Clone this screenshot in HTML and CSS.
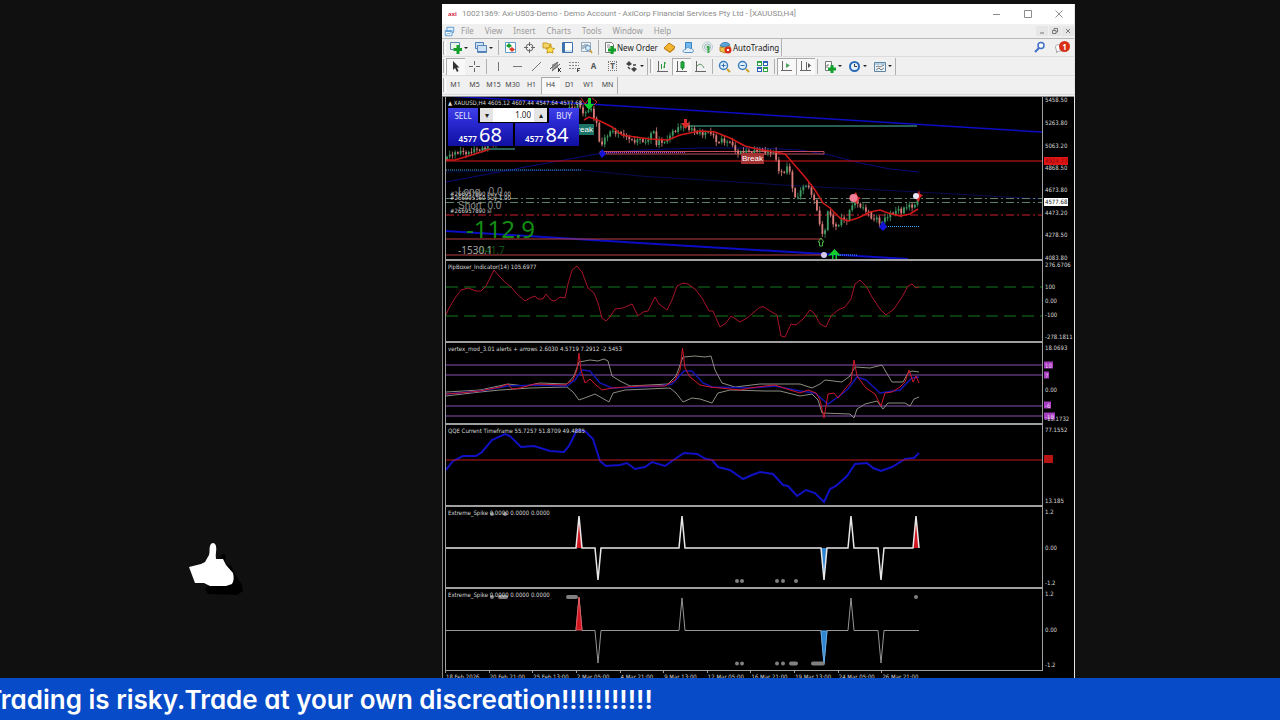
FILE: index.html
```html
<!DOCTYPE html>
<html lang="en">
<head>
	<meta charset="utf-8">
	<title>XAUUSD,H4</title>
	<link rel="stylesheet" href="styles.css">
</head>
<body>
<main class="stage">
	<aside class="side">
		<svg class="thumb" viewBox="0 0 56 56" width="56" height="56">
			<path d="M17 49L26 40L32 17L36 13L38 18L36 24L43 26L50 39L54 45L55 51L49 55L20 54Z" fill="#000"/>
			<path d="M1 27L13 24L17 22L21 15C22 12 21 9 22 6C23 2 27 2 28 6C29 10 27 14 28 19L35 19L38 25L45 33C46 37 46 41 44 44L38 46L22 46L16 43L7 43Z" fill="#fff"/>
		</svg>
	</aside>
	<section class="window">
		<header class="titlebar">
			<span class="brand">axi</span>
			<h1>10021369: Axi-US03-Demo - Demo Account - AxiCorp Financial Services Pty Ltd - [XAUUSD,H4]</h1>
			<button class="win" aria-label="Minimize"><svg viewBox="0 0 10 10"><path d="M1 5.500H8"/></svg></button>
			<button class="win" aria-label="Maximize"><svg viewBox="0 0 10 10"><path d="M1.500 1.500H8.500V8.500H1.500Z"/></svg></button>
			<button class="win" aria-label="Close"><svg viewBox="0 0 10 10"><path d="M1.500 1.500L8.500 8.500M8.500 1.500L1.500 8.500"/></svg></button>
		</header>
		<nav class="menubar">
			<svg class="ico" viewBox="0 0 13 13"><path d="M3.500 1.500H11.500V7.500H3.500Z" fill="#dff0fb" stroke="#4a90cc"/><path d="M1.500 5.500H9.500V11.500H1.500Z" fill="#fff" stroke="#4a90cc"/><path d="M2 6.500H9M3 10L5 8.500L6 9.500L8 8" stroke="#4a90cc" fill="none"/></svg>
			<a href="#">File</a><a href="#">View</a><a href="#">Insert</a><a href="#">Charts</a><a href="#">Tools</a><a href="#">Window</a><a href="#">Help</a>
			<span class="mdi">
				<button aria-label="Minimize chart"><svg viewBox="0 0 8 8"><path d="M2 6H6"/></svg></button>
				<button aria-label="Restore chart"><svg viewBox="0 0 8 8"><path d="M3 3V1.500H6.500V5H5M1.500 3.500H5V6.500H1.500Z"/></svg></button>
				<button aria-label="Close chart"><svg viewBox="0 0 8 8"><path d="M2 2L6 6M6 2L2 6"/></svg></button>
			</span>
		</nav>

		<div class="toolbar">
			<i class="grip"></i>
			<button class="drop" aria-label="New chart"><svg class="ico" viewBox="0 0 13 13"><path d="M1.500 1.500H10.500V8.500H1.500Z" fill="#e8f4e8" stroke="#5b87b5"/><path d="M9 4V13M4.500 8.500H13" stroke="#12a02a" stroke-width="3"/></svg></button>
			<button class="drop" aria-label="Profiles"><svg class="ico" viewBox="0 0 13 13"><path d="M1.500 1.500H9.500V7.500H1.500Z" fill="#cfe3f8" stroke="#4f7fb8"/><path d="M3.500 4.500H12.500V11.500H3.500Z" fill="#cfe3f8" stroke="#5b87b5"/><path d="M4 10.500H12" stroke="#4f7fb8"/></svg></button>
			<i class="sep"></i>
			<button aria-label="Market Watch"><svg class="ico" viewBox="0 0 13 13"><path d="M1.500 1.500H11.500V11.500H1.500Z" fill="#fff" stroke="#5f9ac8"/><path d="M2 5L5 2L8 5L5 7Z" fill="#18a030"/><path d="M5 8L8 6L11 8.500L8 11Z" fill="#d8402c"/></svg></button>
			<button aria-label="Data Window"><svg class="ico" viewBox="0 0 13 13"><circle cx="6.500" cy="6.500" r="3.500" fill="none" stroke="#666"/><path d="M6.500 1V5M6.500 8V12M1 6.500H5M8 6.500H12" stroke="#666"/></svg></button>
			<button aria-label="Navigator"><svg class="ico" viewBox="0 0 13 13"><path d="M1 2H5L6 3H9V7H1Z" fill="#f3d56b" stroke="#c79b25"/><path d="M8 4L9.500 7L12.500 7.500L10.500 9.500L11 12L8 11L5 12L5.500 9.500L4 7.500L7 7Z" fill="#ffe14d" stroke="#c8961a"/></svg></button>
			<button aria-label="Terminal"><svg class="ico" viewBox="0 0 13 13"><path d="M1.500 1.500H11.500V11.500H1.500Z" fill="#fff" stroke="#3f73ad"/><path d="M2 2H4V11H2Z" fill="#3f73ad"/><path d="M4 10H11" stroke="#a8c4e0"/></svg></button>
			<button aria-label="Strategy Tester"><svg class="ico" viewBox="0 0 13 13"><path d="M1.500 1.500H10.500V10.500H1.500Z" fill="#eef3f8" stroke="#92a8bd"/><path d="M3 4V8M5 3V7M7 3V6" stroke="#62788e"/><circle cx="8" cy="7" r="2.500" fill="#d7ecfb" stroke="#5f8fbe"/><path d="M10 9L12 12" stroke="#c9962a" stroke-width="1.500"/></svg></button>
			<i class="sep"></i>
			<button class="text"><svg class="ico" viewBox="0 0 13 13"><path d="M2.500 1.500H8.500L10.500 3.500V11.500H2.500Z" fill="#fff" stroke="#777"/><path d="M4 4H7M4 6H8" stroke="#888"/><path d="M9 5V13M5 9H13" stroke="#12a02a" stroke-width="3"/></svg>New Order</button>
			<button aria-label="MetaEditor"><svg class="ico" viewBox="0 0 13 13"><path d="M1 7L6 2L12 6L7 11Z" fill="#f2b632" stroke="#b87a12"/><path d="M1 7L7 11L12 7V8L7 12L1 8Z" fill="#c98a1a"/></svg></button>
			<button aria-label="Hosting"><svg class="ico" viewBox="0 0 13 13"><path d="M3.500 1.500H9.500V8H3.500Z" fill="#70b8ee" stroke="#3a83c2"/><path d="M2.500 11.500C0 11 1 8 3.500 8.500C4 6 7 6 8 7.500C11 7 13 11 10 11.500Z" fill="#e3f0fb" stroke="#5b93c6"/></svg></button>
			<button aria-label="Signals"><svg class="ico" viewBox="0 0 13 13"><circle cx="6.500" cy="6" r="5" fill="none" stroke="#bbcdd0"/><circle cx="6.500" cy="6" r="3" fill="none" stroke="#8fb4c0"/><circle cx="7" cy="6" r="1.500" fill="#3ca84c"/><path d="M7.500 6V12" stroke="#3ca84c" stroke-width="2"/></svg></button>
			<button class="text"><svg class="ico" viewBox="0 0 13 13"><path d="M1 5C2 1 9 0 11 4L6 6Z" fill="#5aa5dc" stroke="#3b7fb4"/><path d="M1 6L6 7L11 5V9L6 12L1 10Z" fill="#f0c24a" stroke="#b88a24"/><circle cx="9" cy="9" r="3.500" fill="#d8311d"/><path d="M8 8H10V10H8Z" fill="#fff"/></svg>AutoTrading</button>
			<i class="end"></i>
			<span class="tray">
				<button aria-label="Search"><svg class="ico" viewBox="0 0 13 13"><circle cx="8" cy="4.500" r="3" fill="#fff" stroke="#3f6fc4" stroke-width="1.500"/><path d="M6 7L2 11" stroke="#3f6fc4" stroke-width="2"/></svg></button>
				<button class="bell" aria-label="Notifications"><svg class="ico" viewBox="0 0 13 13"><path d="M1.500 6C1 3 8 3 8 6V10H4L2.500 12V10Z" fill="#fff" stroke="#aaa"/></svg><b>1</b></button>
			</span>
		</div>

		<div class="toolbar">
			<i class="grip"></i>
			<button class="on" aria-label="Cursor"><svg class="ico" viewBox="0 0 13 13"><path d="M4 1V10L6 8L8 12L9.500 11L8 7.500H10.500Z" fill="#333"/></svg></button>
			<button aria-label="Crosshair"><svg class="ico" viewBox="0 0 13 13"><path d="M6.500 1V5M6.500 8V12M1 6.500H5M8 6.500H12" stroke="#666"/></svg></button>
			<i class="sep"></i>
			<button aria-label="Vertical line"><svg class="ico" viewBox="0 0 13 13"><path d="M6.500 2V11" stroke="#777"/></svg></button>
			<button aria-label="Horizontal line"><svg class="ico" viewBox="0 0 13 13"><path d="M2 6.500H11" stroke="#777"/></svg></button>
			<button aria-label="Trendline"><svg class="ico" viewBox="0 0 13 13"><path d="M2 11L11 2" stroke="#777"/></svg></button>
			<button aria-label="Channel"><svg class="ico" viewBox="0 0 13 13"><path d="M1 9L9 2M3 11L11 4M4 4V10M6 3V9M8 2V8" stroke="#555"/><path d="M9.500 8V12M12 8L10 10L12 12" stroke="#333" fill="none"/></svg></button>
			<button aria-label="Fibonacci"><svg class="ico" viewBox="0 0 13 13"><path d="M1 2.500H11M1 5.500H11M1 8.500H8" stroke="#888" stroke-dasharray="2 1"/><path d="M9.500 12V8.500H12M9.500 10.500H11.500" stroke="#444" fill="none"/></svg></button>
			<button class="glyph">A</button>
			<button class="glyph"><span class="frame">T</span></button>
			<button class="drop" aria-label="Arrows"><svg class="ico" viewBox="0 0 13 13"><path d="M1 4L4 1L7 4L4 6ZM6 9L9 7L12 9L9 12Z" fill="#444"/><path d="M3 7L5 9M8 5H11" stroke="#444" stroke-width="1.500"/></svg></button>
			<i class="end"></i><i class="grip"></i>
			<button aria-label="Bar chart"><svg class="ico" viewBox="0 0 13 13"><path d="M2.500 1V11.500H12M1 11.500H3" stroke="#666" fill="none"/><path d="M5.500 4V9M8.500 2V8M7 7H8.500M8.500 3H10" stroke="#2b9a3c" fill="none"/></svg></button>
			<button class="on" aria-label="Candlesticks"><svg class="ico" viewBox="0 0 13 13"><path d="M2.500 1V11.500H12M1 11.500H3" stroke="#666" fill="none"/><path d="M7.500 1V10" stroke="#168a2a"/><path d="M6 2H9V8H6Z" fill="#20b040" stroke="#168a2a"/></svg></button>
			<button aria-label="Line chart"><svg class="ico" viewBox="0 0 13 13"><path d="M2.500 1V11.500H12M1 11.500H3" stroke="#666" fill="none"/><path d="M3 6C6 3 8 4 10 8" stroke="#5a8f60" fill="none"/></svg></button>
			<i class="sep"></i>
			<button aria-label="Zoom in"><svg class="ico" viewBox="0 0 13 13"><circle cx="5.500" cy="5.500" r="4" fill="#e2f1fc" stroke="#3a7dc0" stroke-width="1.500"/><path d="M3.500 5.500H7.500M5.500 3.500V7.500" stroke="#2f6bb0"/><path d="M9 9L12 12" stroke="#c9a22a" stroke-width="2"/></svg></button>
			<button aria-label="Zoom out"><svg class="ico" viewBox="0 0 13 13"><circle cx="5.500" cy="5.500" r="4" fill="#e2f1fc" stroke="#3a7dc0" stroke-width="1.500"/><path d="M3.500 5.500H7.500" stroke="#2f6bb0"/><path d="M9 9L12 12" stroke="#c9a22a" stroke-width="2"/></svg></button>
			<button aria-label="Tile windows"><svg class="ico" viewBox="0 0 13 13"><path d="M1 1H6V6H1ZM7 7H12V12H7Z" fill="#2fa044"/><path d="M7 1H12V6H7ZM1 7H6V12H1Z" fill="#2e62b8"/><path d="M2 3H5V5H2ZM8 3H11V5H8ZM2 9H5V11H2ZM8 9H11V11H8Z" fill="#fff"/></svg></button>
			<i class="sep"></i>
			<button class="on" aria-label="Auto scroll"><svg class="ico" viewBox="0 0 13 13"><path d="M2.500 1V10.500H12M1 10.500H3" stroke="#666" fill="none"/><path d="M6 3L10 5.500L6 8Z" fill="#4fa464"/></svg></button>
			<button class="on" aria-label="Chart shift"><svg class="ico" viewBox="0 0 13 13"><path d="M2.500 1V10.500H12M1 10.500H3M7.500 2V10" stroke="#666" fill="none"/><path d="M9 3L12 5.500L9 8Z" fill="#555"/></svg></button>
			<i class="sep"></i>
			<button class="drop" aria-label="Indicators"><svg class="ico" viewBox="0 0 13 13"><path d="M2.500 1.500H8.500V10.500H2.500Z" fill="#fff" stroke="#777"/><path d="M4 8V5H6" stroke="#777" fill="none"/><path d="M9 5V13M5 9H13" stroke="#12a02a" stroke-width="3"/></svg></button>
			<button class="drop" aria-label="Periods"><svg class="ico" viewBox="0 0 13 13"><circle cx="6.500" cy="6.500" r="4.500" fill="#e9f4fd" stroke="#2a6cb8" stroke-width="2"/><path d="M6.500 4V6.500H9" stroke="#333" fill="none"/></svg></button>
			<button class="drop" aria-label="Templates"><svg class="ico" viewBox="0 0 13 13"><path d="M1.500 2.500H12.500V11.500H1.500Z" fill="#eef5fa" stroke="#5b87a5"/><path d="M2 4H12" stroke="#7fa9cc"/><path d="M3 7L5 6L7 7L11 5M3 10L6 8L8 10L11 8" stroke="#777" fill="none"/></svg></button>
			<i class="end"></i>
		</div>

		<div class="toolbar periods">
			<i class="grip"></i>
			<button>M1</button><button>M5</button><button>M15</button><button>M30</button><button>H1</button><button class="on">H4</button><button>D1</button><button>W1</button><button>MN</button>
			<i class="end"></i>
		</div>

		<div class="charts">
			<div class="panel">
				<div class="plot">
					<svg viewBox="446 97 596 162" preserveAspectRatio="none">
						<g fill="none">
							<path d="M446 182L520 168L597 154L640 150L700 148L760 148L800 150L830 155L860 163L890 169L919 172" stroke="#0b0b78"/>
							<path d="M446 172L582 170L640 176L800 186L919 192L1042 199" stroke="#0a0a50"/>
							<path d="M446 96L580 103.500L1042 132" stroke="#0c0cc4" stroke-width="1.500"/>
							<path d="M446 231L640 243L908 259" stroke="#0c0cc4" stroke-width="2"/>
							<path d="M446 170H582" stroke="#3fa0d8" stroke-dasharray="1 1"/>
							<path d="M687 126H917" stroke="#285f55" stroke-width="2"/>
							<path d="M482 149H515" stroke="#285f55" stroke-width="2"/>
							<path d="M446 161H1042" stroke="#e01818"/>
							<path d="M600 151.500H824V154H600Z" stroke="#c24a5c"/>
							<path d="M602 152.500H685" stroke="#a13ad0" stroke-dasharray="1 1"/>
							<path d="M446 239H822M446 255H824" stroke="#b84044"/>
							<path d="M446 198.500H1042M446 202.500H1042" stroke="#5f8068" stroke-dasharray="8 3 2 3"/>
							<path d="M446 215H1042" stroke="#d01c2c" stroke-dasharray="8 3 2 3"/>
							<path d="M882 226.500H919M838 255H858" stroke="#4aa4f0" stroke-dasharray="1 1"/>
						</g>
						<g id="candles"></g>
						<path d="M446 160L455 160L465 157L475 154L490 149M584 120L589 117L600 121L612 127L622 135L635 137L650 139L668 140L680 135L700 131L715 132L730 138L745 146L757 149L775 152L785 154L792 162L805 177L815 190L823 203L830 208L840 218L848 221L858 218L870 212L880 210L888 213L900 216L910 214L918 209" fill="none" stroke="#d01818" stroke-width="1.500"/>
						<path d="M684 119H687V123H690L685.500 129L681 123H684Z" fill="#d82828"/>
						<path d="M581 98L585 104L588 100M592 98L597 102L594 105" fill="none" stroke="#d82828"/>
						<path d="M588 98H591V104H594L589 110L584 104H588Z" fill="#10d030"/>
						<path d="M834.500 249L841 256L837 255V259H835.500V255H833.500V259H832V255L828 256Z" fill="#10d030"/>
						<path d="M821 238L824 242H822.500V246H819.500V242H818Z" fill="none" stroke="#48b048"/>
						<circle cx="824" cy="255" r="3" fill="#d8c8f0"/>
						<path d="M856 192L858 197L861 198L858 200L857 204L853 201L849 199Z" fill="#d82828"/>
						<circle cx="853.500" cy="198" r="4" fill="#f08098"/>
						<path d="M919 190L920 194L923 195L920 198L919 202L916 199Z" fill="#d82828"/>
						<circle cx="916" cy="196" r="3" fill="#e8e8f4"/>
						<path d="M883 221L887 227L883 231L879 227ZM602 149L606 154L602 158L599 154Z" fill="#1414d8"/>
					</svg>
					<span class="caption">▲ XAUUSD,H4 4605.12 4607.44 4547.64 4577.68</span>
					<span class="tag teal">Break</span>
					<span class="tag red">Break</span>
					<div class="stats">
						<span class="order first">#266957890 buy 1.00</span>
						<span class="order second">#266995160 buy 1.00</span>
						<span class="order third">#266957890 sl</span>
						<span class="swap long">Long&nbsp;&nbsp; 0.0</span>
						<span class="swap short">Short&nbsp; 0.0</span>
						<span class="points">-112.9</span>
						<span class="loss dim">-941.7</span>
						<span class="loss">-1530.1</span>
					</div>
					<form class="trade">
						<button type="button">SELL</button>
						<span class="lots">
							<button type="button" aria-label="Less">▾</button>
							<input type="text" value="1.00" aria-label="Volume">
							<button type="button" aria-label="More">▴</button>
						</span>
						<button type="button">BUY</button>
						<button type="button" class="quote">4577 <b>68</b></button>
						<button type="button" class="quote">4577 <b>84</b></button>
					</form>
				</div>
				<div class="scale">
					<span style="top:2%">5458.50</span><span style="top:16%">5263.80</span><span style="top:30%">5063.20</span><span style="top:43%">4868.50</span><span style="top:57%">4673.80</span><span style="top:71%">4473.20</span><span style="top:84%">4278.50</span><span style="top:98%">4083.80</span>
					<span class="mark stop" style="top:39%">4924.77</span><span class="mark bid" style="top:64%">4577.68</span>
				</div>
			</div>

			<div class="panel">
				<div class="plot">
					<svg viewBox="446 261 596 80" preserveAspectRatio="none" fill="none">
						<path d="M446 287H1042M446 316H1042" stroke="#127a1e" stroke-dasharray="12 6"/>
						<path d="M446 315L449 308L455 298L461 290L468 288L476 291L481 291L486 286L494 270L499 276L506 283L511 287L517 294L525 301L530 298L535 296L538 299L543 299L546 294L551 300L555 301L560 297L565 298L568 284L572 270L577 266L582 272L588 288L594 293L598 303L602 318L606 321L610 317L615 309L623 308L632 304L638 316L643 312L648 311L655 297L659 304L667 310L672 300L677 286L683 283L688 284L695 289L702 298L709 311L713 311L720 327L726 323L731 316L740 322L747 318L753 313L760 307L764 307L770 311L777 315L781 336L785 337L791 324L796 325L803 319L810 310L814 313L820 324L826 327L831 316L838 310L845 307L851 299L855 284L860 280L866 286L872 297L880 309L886 315L894 309L902 297L908 286L912 284L916 288L919 287" stroke="#a8142a"/>
					</svg>
					<span class="caption">PipBoxer_Indicator(14) 105.6977</span>
				</div>
				<div class="scale"><span style="top:5%">276.6706</span><span style="top:32%">100</span><span style="top:49%">0.00</span><span style="top:66%">-100</span><span style="top:93%">-278.1811</span></div>
			</div>

			<div class="panel">
				<div class="plot">
					<svg viewBox="446 343 596 80" preserveAspectRatio="none" fill="none">
						<path d="M446 365H1042M446 375H1042M446 406H1042M446 416H1042" stroke="#8a50b4"/>
						<path d="M446 392L480 390L508 384L525 386L540 383L567 384L574 376L579 362L590 360L598 361L604 359L608 361L612 376L620 381L630 386L668 384L676 376L683 357L695 356L705 357L711 356L715 370L722 383L735 387L760 384L800 384L812 388L820 384L825 380L842 382L850 376L855 367L870 368L882 365L886 372L892 382L903 382L908 373L912 371L919 372" stroke="#8c8c84"/>
						<path d="M446 396L480 392L500 390L530 388L567 387L573 392L579 400L590 396L595 394L609 402L613 393L625 390L670 388L676 393L683 402L692 398L700 399L712 403L718 393L730 390L765 391L780 391L800 396L812 394L818 400L822 413L850 414L854 418L857 409L865 404L877 401L883 409L888 403L905 403L910 406L914 399L919 397" stroke="#8c8c84"/>
						<path d="M446 394L480 391L508 386L540 385L567 386L575 380L582 370L590 371L600 383L612 388L660 386L672 384L684 371L692 371L703 383L712 387L750 388L775 386L800 391L815 393L822 399L828 404L838 397L848 389L857 377L866 380L880 393L900 390L912 378L919 377" stroke="#1414b4" stroke-width="1.500"/>
						<path d="M446 394L460 393L480 391L500 387L508 384L512 389L520 388L535 384L565 385L573 380L577 370L579 353L581 370L585 383L590 379L596 385L602 390L612 388L640 386L665 386L675 380L680 370L682.500 348L685 368L690 377L700 385L710 387L740 390L750 388L765 386L775 385L790 390L800 393L808 390L816 393L820 400L824 418L828 394L834 393L838 398L845 389L851 382L854 360L857 376L866 388L875 394L881 406L885 393L892 392L900 387L905 382L909 370L913 382L916 376L919 383" stroke="#d0182c"/>
					</svg>
					<span class="caption">vertex_mod_3.01 alerts + arrows 2.6030 4.5719 7.2912 -2.5453</span>
				</div>
				<div class="scale"><span style="top:6%">18.0693</span><span class="mark level" style="top:27%">10</span><span class="mark level" style="top:39%">7</span><span style="top:57%">0.00</span><span class="mark level" style="top:76%">-6</span><span class="mark level" style="top:89%">-10</span><span style="top:93%">-13.1732</span></div>
			</div>

			<div class="panel">
				<div class="plot">
					<svg viewBox="446 425 596 80" preserveAspectRatio="none" fill="none">
						<path d="M446 470L453 461L463 456L476 456L482 452L492 440L505 434L510 436L521 447L534 446L550 451L564 452L569 446L577 430L585 431L593 439L600 461L606 466L620 465L627 463L635 469L645 467L652 462L665 466L672 461L684 453L697 454L706 459L712 460L718 467L730 470L743 479L752 475L760 472L773 474L783 485L788 486L797 496L806 490L815 493L824 502L830 489L836 486L847 476L855 464L867 463L873 468L881 471L892 467L905 459L914 458L919 453" stroke="#1010c4" stroke-width="2"/>
						<path d="M446 460H1042" stroke="#c01818"/>
					</svg>
					<span class="caption">QQE Current Timeframe 55.7257 51.8709 49.4885</span>
				</div>
				<div class="scale"><span style="top:6%">77.1552</span><span class="mark mid" style="top:42%">50</span><span style="top:93%">13.185</span></div>
			</div>

			<div class="panel">
				<div class="plot">
					<svg viewBox="446 507 596 80" preserveAspectRatio="none" fill="none" stroke-width="2">
						<path d="M576 548L579 515L582 548Z" fill="#d01420"/>
						<path d="M821 548L824 581L827 548Z" fill="#2f86d0"/>
						<path d="M913 548L916 515L919 548Z" fill="#d01420"/>
						<path d="M446 548H576L579 516L582 548H595L598 580L601 548H679L682 516L685 548H821L824 580L827 548H848L851 516L854 548H878L881 580L884 548H913L916 516L919 548" stroke="#e8e8e8" stroke-width="1.500"/>
						<path d="M737 581h0M742 581h0M777 581h0M783 581h0M796 581h0M492 514h0M505 514h0" stroke="#808080" stroke-width="4" stroke-linecap="round"/>
					</svg>
					<span class="caption">Extreme_Spike 0.0000 0.0000 0.0000</span>
				</div>
				<div class="scale"><span style="top:6%">1.2</span><span style="top:50%">0.00</span><span style="top:93%">-1.2</span></div>
			</div>

			<div class="panel">
				<div class="plot">
					<svg viewBox="446 589 596 81" preserveAspectRatio="none" fill="none">
						<path d="M446 630.500H576L579 598L582 630.500H595L598 663L601 630.500H679L682 598L685 630.500H821L824 663L827 630.500H848L851 598L854 630.500H878L881 663L884 630.500H919" stroke="#969696"/>
						<path d="M576 630L579 597L582 630Z" fill="#d01420" stroke="#e05a60"/>
						<path d="M821 631L824 664L827 631Z" fill="#2f86d0" stroke="#60a8e8"/>
						<path d="M737 663.500h0M742 663.500h0M777 663.500h0M783 663.500h0M791 663.500h5M813 663.500h10M568 597h8M916 597h0M492 597h0M500 597h6" stroke="#808080" stroke-width="4" stroke-linecap="round"/>
					</svg>
					<span class="caption">Extreme_Spike 0.0000 0.0000 0.0000</span>
				</div>
				<div class="scale"><span style="top:6%">1.2</span><span style="top:50%">0.00</span><span style="top:93%">-1.2</span></div>
			</div>

			<div class="dates">
				<span>18 Feb 2026</span><span>20 Feb 21:00</span><span>25 Feb 13:00</span><span>2 Mar 05:00</span><span>4 Mar 21:00</span><span>9 Mar 13:00</span><span>12 Mar 05:00</span><span>16 Mar 21:00</span><span>19 Mar 13:00</span><span>24 Mar 05:00</span><span>26 Mar 21:00</span>
			</div>
		</div>
	</section>
</main>
<footer class="ticker"><p>Trading is risky.Trade at your own discreation!!!!!!!!!!!</p></footer>
<script src="script.js"></script>
</body>
</html>
```

FILE: styles.css
```css
* {box-sizing:border-box;}
body {margin:0;height:100vh;display:flex;flex-direction:column;background:#101010;overflow:hidden;font-family:"Noto Sans",sans-serif;}
button {border:0;padding:0;margin:0;background:none;color:inherit;font:inherit;}
svg {display:block;}
a {color:inherit;text-decoration:none;}

.stage {flex:1;min-height:0;display:grid;grid-template-columns:442fr 633fr 205fr;padding-top:4px;}
.side {display:flex;align-items:flex-end;padding:0 0 82px 188px;}

.window {min-height:0;min-width:0;display:flex;flex-direction:column;background:#f0f0f0;border-right:1px solid #e4e4e4;font-size:8px;line-height:12px;color:#222;}
.titlebar {height:20px;display:flex;align-items:center;background:#fff;color:#8c8c8c;padding-left:6px;}
.titlebar h1 {flex:1;margin:0;font-size:8px;font-weight:400;font-family:Roboto,sans-serif;white-space:nowrap;}
.brand {width:14px;color:#d8304a;font:bold 6px/8px "Noto Sans",sans-serif;}
.win {width:31px;}
.win svg {width:10px;height:10px;margin:auto;fill:none;stroke:#8c8c8c;}
.menubar {height:15px;display:flex;align-items:center;gap:11px;padding-left:2px;border-bottom:1px solid #b8b8b8;color:#9a9a9a;}
.menubar .ico {width:11px;height:11px;margin-right:-5px;}
.mdi {margin-left:auto;display:flex;gap:1px;}
.mdi button {width:12px;background:#e6e6e6;}
.mdi svg {width:8px;height:10px;margin:auto;fill:none;stroke:#777;}

.toolbar {height:18px;display:flex;align-items:center;padding-left:1px;border-bottom:1px solid #dcdcdc;}
.toolbar + .toolbar {height:19px;}
.toolbar button {width:19px;height:17px;display:flex;align-items:center;justify-content:center;}
.ico {width:13px;height:13px;flex:none;}
.toolbar .drop {width:25px;}
.drop::after {content:"";border:2px solid transparent;border-top-color:#222;margin:2px 0 0 2px;}
.toolbar .text {width:auto;padding:0 2px;gap:1px;white-space:nowrap;}
.toolbar .on {background:#f8f8f8;box-shadow:inset 1px 1px #aaa;}
.glyph {color:#555;font-weight:bold;}
.frame {border:1px dotted #777;line-height:8px;width:9px;}
.grip {width:3px;height:14px;border-left:1px solid #aaa;border-right:1px solid #fff;}
.sep {width:1px;height:15px;margin:0 2px;background:#b0b0b0;}
.end {width:1px;height:17px;margin-right:2px;background:#b0b0b0;}
.periods {font-size:7px;color:#444;}
.tray {margin-left:auto;display:flex;gap:2px;padding-right:4px;}
.bell {position:relative;}
.bell b {position:absolute;right:0;top:2px;width:11px;height:11px;border-radius:50%;background:#d83018;color:#fff;font-size:8px;line-height:11px;}

.charts {flex:1;min-height:0;display:grid;grid-template-rows:2fr repeat(5,1fr) 7px;background:#000;color:#d8d8d8;border-top:1px solid #8c8c8c;border-left:1px solid #888;padding-left:2px;margin-top:1px;font:6px/8px "DejaVu Sans Condensed","DejaVu Sans",sans-serif;}
.panel {min-height:0;display:flex;}
.plot {flex:1;min-width:0;position:relative;border:1px solid #a0a0a0;border-width:0 1px 2px;overflow:hidden;}
.panel:nth-child(6) .plot {border-bottom-width:1px;}
.plot > svg {width:100%;height:100%;}
.caption {position:absolute;left:2px;top:2px;white-space:pre;}
.scale {width:31px;position:relative;}
.scale span {position:absolute;left:2px;transform:translateY(-50%);white-space:nowrap;}
.scale .mark {left:1px;padding:0 1px;}
.scale .stop {background:#e01414;color:#8c0808;}
.scale .bid {background:#fff;color:#111;}
.scale .level {background:#a63cc0;color:#f0d0f8;line-height:7px;}
.scale .mid {background:#b81414;color:#b81414;}
.dates {display:flex;overflow:hidden;padding-right:31px;line-height:11px;}
.dates span {flex:0 0 7.3%;border-left:1px solid #a0a0a0;height:2px;white-space:nowrap;}

.tag {position:absolute;font:8px/11px "Liberation Sans",sans-serif;padding:0 1px;color:#fff;}
.tag.red {left:295px;top:56px;background:#a43434;}
.tag.teal {left:125px;top:27px;background:#1c7468;}
.stats span {position:absolute;left:4px;white-space:nowrap;}
.stats .first {top:93px;}
.stats .second {top:97px;}
.stats .third {top:110px;}
.stats .swap {left:12px;font:10px/12px "Liberation Sans",sans-serif;color:#8c8c8c;}
.stats .long {top:89px;}
.stats .short {top:103px;}
.stats .points {left:20px;top:118px;font-size:24px;line-height:28px;font-family:"Noto Sans",sans-serif;color:#148c14;}
.stats .loss {left:12px;top:147px;font-size:10px;line-height:12px;font-family:"Noto Sans",sans-serif;color:#a0a0a0;}
.stats .dim {left:30px;color:#0c5a14;}

.trade {position:absolute;left:2px;top:11px;width:131px;display:grid;grid-template-columns:30px 1fr 1fr 30px;gap:0 2px;background:#000;font:8px/15px "Noto Sans",sans-serif;color:#e8e8ff;}
.trade > button {background:linear-gradient(#4040e8,#2828d0);}
.lots {grid-column:span 2;display:flex;height:14px;background:#fff;}
.lots button {width:13px;background:#e4e4e4;color:#222;line-height:14px;}
.lots input {flex:1;min-width:0;border:0;padding:0 3px;text-align:right;font:8px/14px "Noto Sans",sans-serif;color:#222;}
.trade .quote {grid-column:span 2;height:23px;background:linear-gradient(#2828d0,#1010a0);font-size:8px;font-weight:600;color:#fff;line-height:23px;}
.quote b {font-size:20px;font-weight:400;}

.ticker {height:42px;background:#084bc8;overflow:hidden;}
.ticker p {width:51%;margin:0;display:flex;justify-content:flex-end;white-space:nowrap;color:#fff;font:600 26px/43px Inter,sans-serif;font-feature-settings:"cv11";}
```

FILE: script.js
```js
// close price along the chart, as x,y pairs in plot units
var closes = [446,160, 449,155, 452,153, 457,153, 463,152, 468,153, 475,150, 481,149, 500,140, 560,112,
	580,105, 582,116, 586,112, 589,108, 592,110, 595,122, 597,125, 599,138, 600,149, 603,140, 606,137, 610,133, 614,130,
	617,134, 620,131, 624,138, 628,136, 632,141, 636,142, 640,139, 644,141, 646,143, 650,136, 654,131, 656,144, 659,140,
	665,144, 668,138, 671,132, 676,131, 680,127, 685,124, 688,129, 692,130, 697,132, 700,133, 704,135, 709,131, 712,133,
	716,141, 719,144, 722,138, 726,143, 730,141, 734,150, 738,152, 744,152, 750,152, 757,150, 763,151, 768,152, 775,153,
	777,165, 779,170, 783,174, 787,168, 790,172, 793,190, 795,198, 799,195, 803,187, 806,184, 810,190, 813,198, 816,207,
	819,218, 821,232, 824,238, 826,222, 828,212, 831,216, 835,228, 839,224, 842,218, 846,222, 849,212, 852,205, 855,200,
	858,204, 862,207, 866,211, 869,214, 872,220, 876,216, 878,222, 882,224, 884,218, 887,216, 891,213, 895,214, 898,208,
	901,212, 905,207, 909,206, 913,208, 916,200, 919,200];

function priceAt(x){
	for(var i=2;i<closes.length;i+=2){
		if(x <= closes[i]){
			var k = (x-closes[i-2])/(closes[i]-closes[i-2]);
			return closes[i-1] + k*(closes[i+1]-closes[i-1]);
		}
	}
	return closes[closes.length-1];
}

var out = '';
var prev = 160;
for(var n=0;n<174;n++){
	var x = 447 + n*2.72;
	var y = priceAt(x) + (n*7%5-2)*0.8;
	var up = y < prev;
	var top1 = Math.min(y,prev);
	var h = Math.max(Math.abs(y-prev),1);
	var color = up ? '#3f9a62' : '#d87c78';
	var wick = 1 + n*11%4;
	out += '<path d="M'+x+' '+(top1-wick)+'V'+(top1+h+n*5%4+1)+'" stroke="'+color+'" stroke-width="0.8"/>';
	out += '<rect x="'+(x-0.9)+'" y="'+top1+'" width="1.8" height="'+h+'" fill="'+color+'"/>';
	prev = y;
}
document.getElementById('candles').innerHTML = out;
```
